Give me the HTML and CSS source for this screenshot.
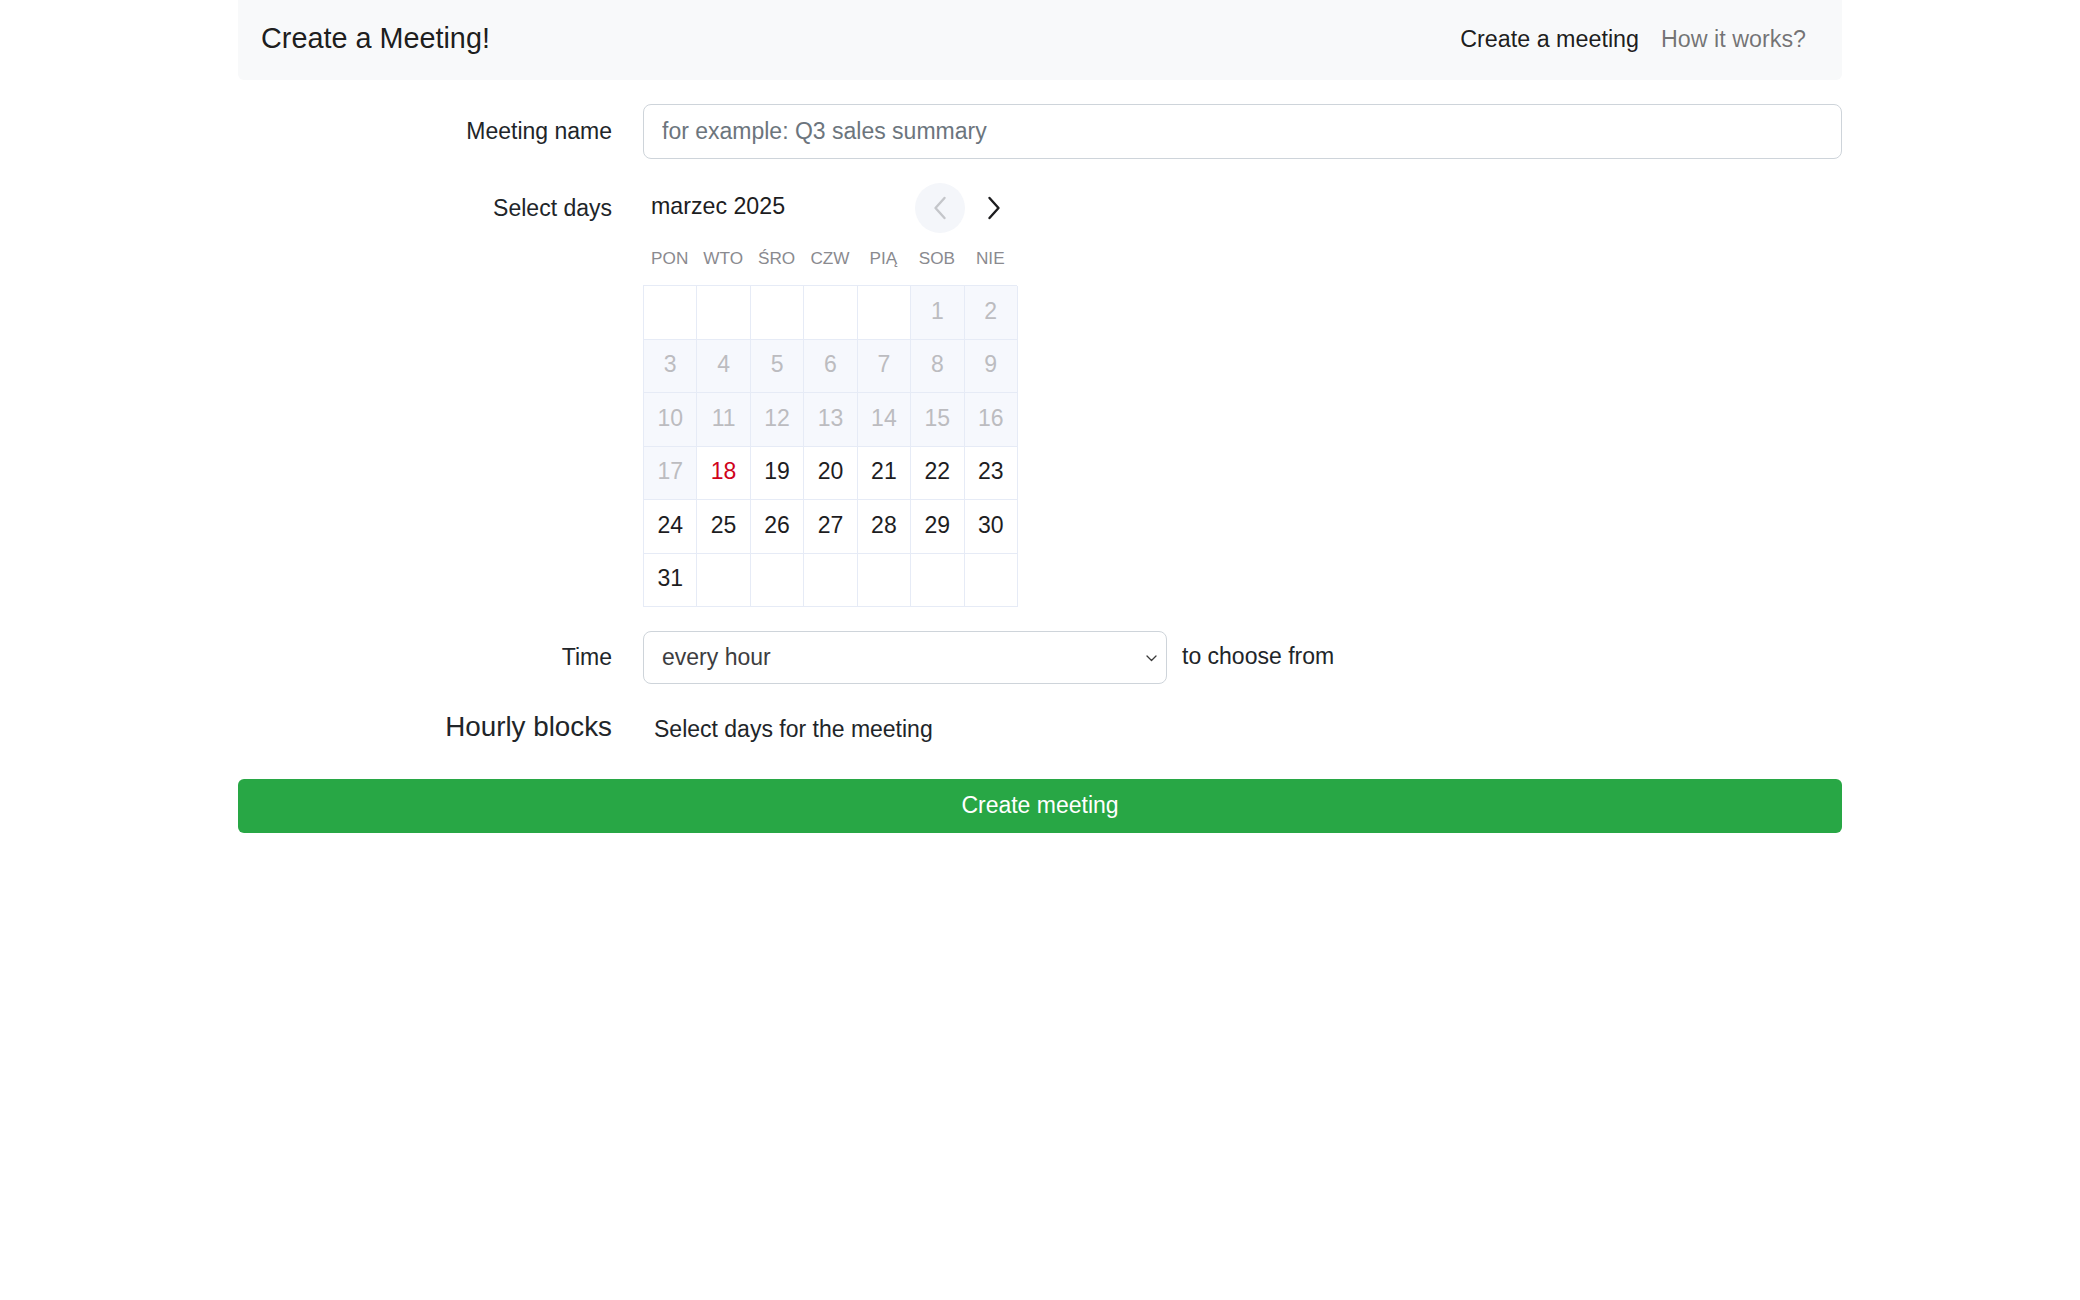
FILE: index.html
```html
<!DOCTYPE html>
<html lang="en">
<head>
<meta charset="utf-8">
<title>Create a Meeting!</title>
<link rel="stylesheet" href="styles.css">
</head>
<body>
<div class="container">
  <nav class="navbar">
    <span class="brand">Create a Meeting!</span>
    <div class="nav-links">
      <a class="nav-link active" href="#">Create a meeting</a>
      <a class="nav-link" href="#">How it works?</a>
    </div>
  </nav>

  <form class="form">
    <div class="row row-name">
      <label class="label" for="name">Meeting name</label>
      <input class="input" id="name" type="text" placeholder="for example: Q3 sales summary">
    </div>

    <div class="row row-days">
      <div class="label label-days">Select days</div>
      <div class="calendar">
        <div class="cal-head">
          <span class="cal-month">marzec 2025</span>
          <div class="cal-nav">
            <button type="button" class="cal-btn cal-prev" aria-label="previous">
              <svg width="14" height="24" viewBox="0 0 14 24"><polyline points="11.5,2 2.5,12 11.5,22" fill="none" stroke="#c4c6ca" stroke-width="2.4" stroke-linecap="round" stroke-linejoin="round"/></svg>
            </button>
            <button type="button" class="cal-btn cal-next" aria-label="next">
              <svg width="14" height="24" viewBox="0 0 14 24"><polyline points="2.5,2 11.5,12 2.5,22" fill="none" stroke="#1d1d1f" stroke-width="2.4" stroke-linecap="round" stroke-linejoin="round"/></svg>
            </button>
          </div>
        </div>
        <div class="cal-weekdays">
          <span>PON</span><span>WTO</span><span>ŚRO</span><span>CZW</span><span>PIĄ</span><span>SOB</span><span>NIE</span>
        </div>
        <div class="cal-grid">
          <span class="day empty"></span><span class="day empty"></span><span class="day empty"></span><span class="day empty"></span><span class="day empty"></span><span class="day past">1</span><span class="day past">2</span>
          <span class="day past">3</span><span class="day past">4</span><span class="day past">5</span><span class="day past">6</span><span class="day past">7</span><span class="day past">8</span><span class="day past">9</span>
          <span class="day past">10</span><span class="day past">11</span><span class="day past">12</span><span class="day past">13</span><span class="day past">14</span><span class="day past">15</span><span class="day past">16</span>
          <span class="day past">17</span><span class="day today">18</span><span class="day">19</span><span class="day">20</span><span class="day">21</span><span class="day">22</span><span class="day">23</span>
          <span class="day">24</span><span class="day">25</span><span class="day">26</span><span class="day">27</span><span class="day">28</span><span class="day">29</span><span class="day">30</span>
          <span class="day">31</span><span class="day empty"></span><span class="day empty"></span><span class="day empty"></span><span class="day empty"></span><span class="day empty"></span><span class="day empty"></span>
        </div>
      </div>
    </div>

    <div class="row row-time">
      <label class="label" for="time">Time</label>
      <div class="time-field">
        <div class="select-wrap">
          <select class="select" id="time">
            <option>every hour</option>
            <option>every 30 minutes</option>
            <option>every 15 minutes</option>
          </select>
          <svg class="select-caret" width="11" height="7" viewBox="0 0 11 7"><polyline points="1,1 5.5,5.5 10,1" fill="none" stroke="#3a3a3a" stroke-width="1.3" stroke-linecap="round" stroke-linejoin="round"/></svg>
        </div>
        <span class="time-suffix">to choose from</span>
      </div>
    </div>

    <div class="row row-blocks">
      <div class="label label-blocks">Hourly blocks</div>
      <div class="blocks-text">Select days for the meeting</div>
    </div>

    <button type="submit" class="submit">Create meeting</button>
  </form>
</div>
</body>
</html>
```

FILE: styles.css
```css
* {
  box-sizing: border-box;
}

html, body {
  margin: 0;
  padding: 0;
  background: #ffffff;
}

body {
  font-family: "Liberation Sans", Arial, Helvetica, sans-serif;
  font-size: 23px;
  color: #212529;
}

.container {
  width: 1604px;
  margin: 0 auto;
}

/* Navbar */
.navbar {
  height: 80px;
  background: #f8f9fa;
  border-radius: 0 0 6px 6px;
  display: flex;
  align-items: center;
  justify-content: space-between;
  padding: 0 23px;
}

.brand {
  font-size: 28.8px;
  color: rgba(0, 0, 0, 0.9);
  line-height: 1;
  margin-top: -3px;
}

.nav-links {
  display: flex;
  align-items: center;
  margin-right: 2px;
}

.nav-link {
  padding: 0 11px;
  text-decoration: none;
  color: rgba(0, 0, 0, 0.55);
  font-size: 23.3px;
  margin-top: -2px;
}

.nav-link.active {
  color: rgba(0, 0, 0, 0.9);
}

/* Form rows */
.form {
  display: flex;
  flex-direction: column;
}

.row {
  display: grid;
  grid-template-columns: 374px 1fr;
  column-gap: 31px;
}

.label {
  text-align: right;
  color: #212529;
}

.row-name {
  margin-top: 24px;
  align-items: center;
}

.input {
  width: 100%;
  height: 55px;
  border: 1px solid #ced4da;
  border-radius: 8px;
  padding: 0 18px;
  font-family: inherit;
  font-size: 23px;
  color: #212529;
  background: #fff;
}

.input::placeholder {
  color: #6c757d;
}

/* Calendar */
.row-days {
  margin-top: 24px;
  align-items: start;
}

.label-days {
  line-height: 50px;
}

.calendar {
  width: 374px;
}

.cal-head {
  height: 50px;
  display: flex;
  align-items: center;
  justify-content: space-between;
}

.cal-month {
  padding-left: 8px;
  font-size: 23.2px;
  color: #1d1d1f;
  margin-top: -3px;
}

.cal-nav {
  display: flex;
  gap: 4px;
  margin-right: -2px;
}

.cal-btn {
  width: 50px;
  height: 50px;
  border: 0;
  border-radius: 50%;
  background: transparent;
  display: flex;
  align-items: center;
  justify-content: center;
  padding: 0;
  cursor: pointer;
}

.cal-prev {
  background: #f4f6fa;
}

.cal-weekdays {
  height: 50px;
  margin-bottom: 2px;
  display: grid;
  grid-template-columns: repeat(7, 1fr);
  align-items: center;
  text-align: center;
  font-size: 17.2px;
  color: #8a8a8f;
}

.cal-grid {
  display: grid;
  grid-template-columns: repeat(7, 53.43px);
  grid-auto-rows: 53.5px;
  border-top: 1.5px solid #e6ebf6;
  border-left: 1.5px solid #e6ebf6;
}

.day {
  display: flex;
  align-items: center;
  justify-content: center;
  border-right: 1.5px solid #e6ebf6;
  border-bottom: 1.5px solid #e6ebf6;
  font-size: 23px;
  color: #1d1d1f;
  background: #fff;
  padding-bottom: 2px;
}

.day.past {
  background: #f6f8fd;
  color: #bcbcc0;
}

.day.today {
  color: #d0021b;
}

/* Time */
.row-time {
  margin-top: 24px;
  align-items: center;
}

.time-field {
  display: flex;
  align-items: center;
  gap: 15px;
}

.select-wrap {
  position: relative;
  width: 524px;
}

.select {
  width: 100%;
  height: 53px;
  -webkit-appearance: none;
  appearance: none;
  border: 1px solid #ced4da;
  border-radius: 8px;
  padding: 0 18px 2px;
  font-family: inherit;
  font-size: 23px;
  color: #3d3d40;
  background: #fff;
}

.select-caret {
  position: absolute;
  right: 10px;
  top: 24px;
  pointer-events: none;
}

.time-suffix {
  color: #212529;
  margin-top: -2px;
}

/* Hourly blocks */
.row-blocks {
  margin-top: 24px;
  height: 40px;
  align-items: center;
}

.label-blocks {
  font-size: 27.8px;
  margin-top: -3px;
}

.blocks-text {
  padding-left: 11px;
  margin-top: 3px;
}

/* Submit */
.submit {
  margin-top: 31px;
  width: 100%;
  height: 54px;
  border: 0;
  border-radius: 6px;
  background: #28a745;
  color: #fff;
  font-family: inherit;
  font-size: 23px;
  padding-bottom: 3px;
  cursor: pointer;
}
```
